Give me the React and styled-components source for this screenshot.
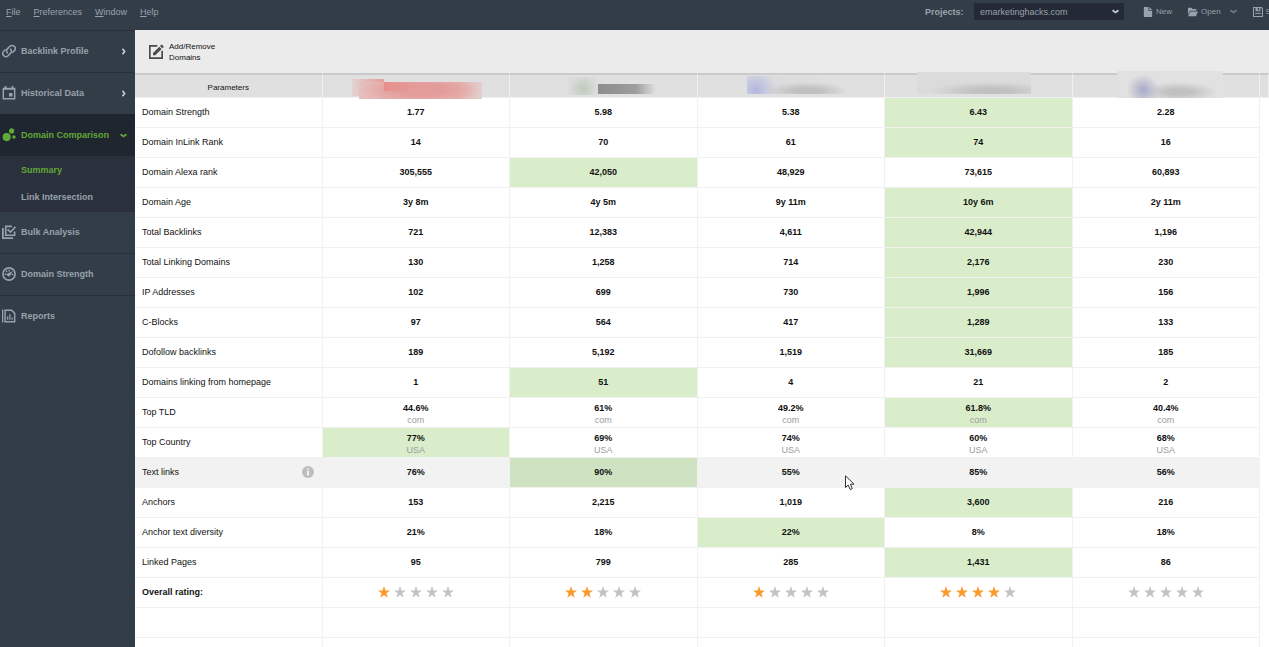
import styled, { createGlobalStyle, css } from "styled-components";

const GlobalStyle = createGlobalStyle`
  * {
    box-sizing: border-box;
  }

  body {
    margin: 0;
    font-family: "Liberation Sans", Arial, sans-serif;
    font-size: 9px;
    color: #111111;
    background: #ffffff;
  }

  button,
  select {
    font: inherit;
    color: inherit;
    border: 0;
    padding: 0;
    background: none;
    cursor: pointer;
  }
`;

const StyledApp = styled.div`
  display: flex;
  flex-direction: column;
  height: 100vh;
  overflow: hidden;
`;

/* ---------- top bar ---------- */

const StyledTopBar = styled.header`
  display: flex;
  flex: none;
  justify-content: space-between;
  height: 30px;
  overflow: hidden;
  color: #98a2ad;
  background: #333d48;
`;

const StyledMenu = styled.nav`
  display: flex;
  align-items: center;
  gap: 13px;
  height: 24px;
  padding-left: 6px;
`;

const StyledMenuButton = styled.button`
  &::first-letter {
    text-decoration: underline;
  }
`;

const StyledProjects = styled.div`
  display: flex;
  align-items: center;
  width: 344px;
  height: 23px;
  overflow: hidden;
  white-space: nowrap;
`;

const StyledProjectsLabel = styled.label`
  width: 49px;
  flex: none;
  font-weight: bold;
`;

const StyledSelectWrap = styled.div`
  position: relative;
  flex: none;
  width: 150px;
  margin-right: 19px;

  svg {
    position: absolute;
    top: 5px;
    right: 5px;
    pointer-events: none;
  }
`;

const StyledSelect = styled.select`
  width: 100%;
  height: 17px;
  padding: 0 6px;
  appearance: none;
  border-radius: 1px;
  background: #232a35;
`;

const StyledFileButton = styled.button`
  display: flex;
  flex: none;
  align-items: center;
  gap: 3px;
  height: 22px;
  margin-right: ${({ $space }) => $space || 16}px;
  font-size: 8px;
`;

/* ---------- sidebar ---------- */

const StyledBody = styled.div`
  display: flex;
  flex: 1;
  min-height: 0;
`;

const StyledSidebar = styled.nav`
  flex: none;
  width: 135px;
  color: #98a2ad;
  font-weight: bold;
  background: #333d48;
`;

const StyledNavItem = styled.button`
  display: flex;
  align-items: center;
  gap: 5px;
  width: 100%;
  height: 42px;
  padding: 0 8px 1px 2px;
  text-align: left;
  font-weight: bold;
  border-top: 1px solid #28303b;

  ${({ $active }) =>
    $active &&
    css`
      color: #62a836;
      border-color: #1f262f;
      background: #1f262f;
    `}

  svg {
    flex: none;
  }

  span {
    flex: 1;
  }
`;

const StyledSubNav = styled.div`
  display: flex;
  flex-direction: column;
  padding-top: 1px;
  background: #2a313d;
`;

const StyledSubLink = styled.a`
  padding-left: 21px;
  line-height: 27px;
  text-decoration: none;
  color: ${({ $active }) => ($active ? "#62a836" : "#98a2ad")};
`;

/* ---------- content ---------- */

const StyledMain = styled.main`
  flex: 1;
  min-width: 0;
  overflow: hidden;
`;

const StyledToolbar = styled.div`
  display: flex;
  align-items: center;
  height: 43px;
  padding-left: 13px;
  background: #ebebeb;
`;

const StyledToolButton = styled.button`
  display: flex;
  align-items: center;
  gap: 5px;
  font-size: 8px;
  line-height: 11px;
  text-align: left;
`;

const StyledTable = styled.table`
  width: 100%;
  table-layout: fixed;
  border-collapse: separate;
  border-spacing: 0;
`;

const StyledHeadCell = styled.th`
  position: relative;
  height: 25px;
  padding: 2px 0 0;
  font-size: 8px;
  font-weight: normal;
  border-top: 2px solid #cacaca;
  border-right: 1px solid #f0f0f0;
  border-bottom: 1px solid #f0f0f0;
  background: #e0e0e0;
`;

const StyledSmudge = styled.span`
  position: absolute;
  left: ${({ $x }) => $x}px;
  top: ${({ $y }) => $y}px;
  width: ${({ $w }) => $w}px;
  height: ${({ $h }) => $h}px;
  background: ${({ $fill }) => $fill};
`;

const StyledRow = styled.tr`
  background: ${({ $hover }) => ($hover ? "#f2f2f2" : "#ffffff")};
`;

const StyledNameCell = styled.th`
  height: 30px;
  padding: 0 8px 2px 7px;
  text-align: left;
  font-weight: ${({ $bold }) => ($bold ? "bold" : "normal")};
  border-right: 1px solid #f1f1f1;
  border-bottom: 1px solid #f1f1f1;

  div {
    display: flex;
    align-items: center;
    justify-content: space-between;
  }
`;

const StyledCell = styled.td`
  height: 30px;
  padding: ${({ $tall }) => ($tall ? "2px 0 0" : "0 0 2px")};
  text-align: center;
  line-height: 12px;
  font-weight: bold;
  border-right: 1px solid #f1f1f1;
  border-bottom: 1px solid #f1f1f1;
  background: ${({ $best, $hover }) =>
    $best ? ($hover ? "#cfe3c3" : "#d9edca") : "transparent"};

  small {
    display: block;
    font-size: 9px;
    font-weight: normal;
    color: #9b9b9b;
  }
`;

const StyledEdgeCell = styled.td`
  padding: 0;
  background: #ffffff;
`;

const StyledStars = styled.div`
  display: flex;
  justify-content: center;
  gap: 4px;
`;

const StyledCursor = styled.svg`
  position: absolute;
  left: 845px;
  top: 475px;
  pointer-events: none;
`;

/* ---------- icons ---------- */

const Icon = ({ size = 14, children, ...rest }) => (
  <svg
    width={size}
    height={size}
    viewBox="0 0 24 24"
    fill="currentColor"
    aria-hidden="true"
    {...rest}
  >
    {children}
  </svg>
);

const LinkIcon = () => (
  <Icon fill="none" stroke="currentColor" strokeWidth="2.6" strokeLinecap="round">
    <path d="M9.5 15.500a5.200 5.200 0 0 1 0-7.500l4-4a5.200 5.200 0 0 1 7.500 7.500l-2.500 2.500" />
    <path d="M14.500 8.500a5.200 5.200 0 0 1 0 7.500l-4 4a5.200 5.200 0 0 1-7.500-7.500l2.500-2.500" />
  </Icon>
);

const CalendarIcon = () => (
  <Icon>
    <path
      fillRule="evenodd"
      d="M4.500 0h3v3h9V0h3v3H23v20H1V3h3.500zM3.500 6.500v14h17v-14z"
    />
    <path d="M12 12h6v6h-6z" />
  </Icon>
);

const BubblesIcon = () => (
  <Icon>
    <circle cx="8" cy="15.500" r="7" />
    <circle cx="16.500" cy="5" r="4.500" />
    <circle cx="20.500" cy="15.500" r="3" />
  </Icon>
);

const ChecklistIcon = () => (
  <Icon>
    <path d="M0 5h3v16h16v3H0z" />
    <path d="M5 1h12v2.800H7.800v12.400h12.400V11H23v8H5z" />
    <path d="M8.500 8.500l2-2 4 3.800 7.500-8 2 2-9.500 10z" />
  </Icon>
);

const GaugeIcon = () => (
  <Icon>
    <circle cx="12" cy="12" r="10.500" fill="none" stroke="currentColor" strokeWidth="2.800" />
    <path d="M18.500 7l-4.600 7.500a2.700 2.700 0 1 1-3.600-3.600z" />
    <path d="M4.500 11h3.500v2.500H4.500zM16.500 11.500h3V14h-3zM11 4.500h2.400v3H11zM6 7l1.700-1.700 2 2L8 9z" />
  </Icon>
);

const ReportIcon = () => (
  <Icon>
    <path d="M0 1h2.200v22H0z" />
    <path fillRule="evenodd" d="M4 1h13l6 6v16H4zM6.500 3.500v17h14V8.200l-4.700-4.700z" />
    <path d="M8.500 13h2.200v5.500H8.500zM12.400 9h2.200v9.500h-2.200zM16.300 14.500h2.200v4h-2.200z" />
  </Icon>
);

const EditIcon = () => (
  <Icon size={16} color="#4b4b4b">
    <path d="M1.500 1.500H14V4H4v16h16V10h2.500v12.500h-21z" />
    <path d="M7.500 13.500L17 4l3.500 3.500L11 17H7.500zM18 3l1.700-1.700a1 1 0 0 1 1.400 0l2.100 2.100a1 1 0 0 1 0 1.400L21.500 6.500z" />
  </Icon>
);

const FileIcon = () => (
  <Icon size={10}>
    <path d="M2 0h11v9h9v15H2z" />
    <path d="M15 0l7 7h-7z" />
  </Icon>
);

const FolderIcon = () => (
  <Icon size={10}>
    <path d="M0 2h8l3 3h9v4H5L0 19z" />
    <path d="M6 11h18l-5 11H0z" />
  </Icon>
);

const SaveIcon = () => (
  <Icon size={10}>
    <path
      fillRule="evenodd"
      d="M0 0h21l3 3v21H0zM2.500 2.500v19h19V4l-1.500-1.500h-2V10H6V2.500zM11.500 2.500V8H15V2.500z"
    />
    <path d="M5 14h14v2.500H5z" />
  </Icon>
);

const Chevron = ({ down, color = "#c3cad2" }) => (
  <svg width="7" height="7" viewBox="0 0 7 7" fill="none" stroke={color} strokeWidth="1.700" aria-hidden="true">
    <path d={down ? "M0.500 2.200L3.500 4.400L6.500 2.200" : "M2.500 0.800L4.600 3.500L2.500 6.200"} />
  </svg>
);

const InfoIcon = () => (
  <svg width="12" height="12" viewBox="0 0 12 12" role="img" aria-label="Info">
    <circle cx="6" cy="6" r="6" fill="#bdbdbd" />
    <path d="M5.200 2.500h1.600v1.500H5.200zM5.200 5h1.600v4.500H5.200z" fill="#ffffff" />
  </svg>
);

const Star = ({ on }) => (
  <svg width="12" height="12" viewBox="0 0 24 24" fill={on ? "#fb9a2c" : "#c2c2c2"} aria-hidden="true">
    <path d="M12 0l3 8.800h9l-7.200 5.600 2.700 9L12 18l-7.500 5.400 2.700-9L0 8.800h9z" />
  </svg>
);

/* ---------- data ---------- */

// hidden domain names in the column heads, relative to their cell
const smudges = [
  [
    { x: 29, y: 4, w: 32, h: 17, fill: "linear-gradient(90deg, #e2d3d2, #e39c99)" },
    {
      x: 36,
      y: 7,
      w: 123,
      h: 17,
      fill: "radial-gradient(ellipse 60px 14px at 50% 45%, #e39c9a 40%, transparent), linear-gradient(90deg, #e4c0be, #e5b3b1 30%, #e5b3b1 80%, #e3cfce)",
    },
    { x: 61, y: 7, w: 30, h: 9, fill: "linear-gradient(100deg, #e98d88, rgba(227, 156, 154, 0))" },
  ],
  [
    { x: 58, y: 2, w: 30, h: 18, fill: "radial-gradient(circle at 50% 65%, #bfcbbd, #dcdcdc 75%)" },
    { x: 88, y: 9, w: 58, h: 10, fill: "linear-gradient(90deg, #8d8d8d, #9d9d9d 65%, #e0e0e0)" },
  ],
  [
    {
      x: 49,
      y: 1,
      w: 103,
      h: 18,
      fill: "radial-gradient(circle 20px at 9px 14px, #b2b7df, transparent), radial-gradient(ellipse 42px 9px at 60px 15px, #c0c0c0 30%, transparent), linear-gradient(90deg, #dadadd, #e0e0e0)",
    },
  ],
  [
    {
      x: 32,
      y: -3,
      w: 114,
      h: 22,
      fill: "radial-gradient(ellipse 60px 9px at 74px 19px, #c1c1c1 30%, transparent), #dbdbdb",
    },
  ],
  [
    {
      x: 44,
      y: -4,
      w: 106,
      h: 27,
      fill: "radial-gradient(circle 16px at 26px 19px, #adb0ca 10%, transparent), radial-gradient(ellipse 38px 10px at 62px 21px, #c1c1c1 30%, transparent), #e1e1e1",
    },
  ],
];

const rows = [
  { name: "Domain Strength", values: ["1.77", "5.98", "5.38", "6.43", "2.28"], best: 3 },
  { name: "Domain InLink Rank", values: ["14", "70", "61", "74", "16"], best: 3 },
  { name: "Domain Alexa rank", values: ["305,555", "42,050", "48,929", "73,615", "60,893"], best: 1 },
  { name: "Domain Age", values: ["3y 8m", "4y 5m", "9y 11m", "10y 6m", "2y 11m"], best: 3 },
  { name: "Total Backlinks", values: ["721", "12,383", "4,611", "42,944", "1,196"], best: 3 },
  { name: "Total Linking Domains", values: ["130", "1,258", "714", "2,176", "230"], best: 3 },
  { name: "IP Addresses", values: ["102", "699", "730", "1,996", "156"], best: 3 },
  { name: "C-Blocks", values: ["97", "564", "417", "1,289", "133"], best: 3 },
  { name: "Dofollow backlinks", values: ["189", "5,192", "1,519", "31,669", "185"], best: 3 },
  { name: "Domains linking from homepage", values: ["1", "51", "4", "21", "2"], best: 1 },
  { name: "Top TLD", values: ["44.6%", "61%", "49.2%", "61.8%", "40.4%"], note: "com", best: 3 },
  { name: "Top Country", values: ["77%", "69%", "74%", "60%", "68%"], note: "USA", best: 0 },
  { name: "Text links", values: ["76%", "90%", "55%", "85%", "56%"], best: 1, hover: true },
  { name: "Anchors", values: ["153", "2,215", "1,019", "3,600", "216"], best: 3 },
  { name: "Anchor text diversity", values: ["21%", "18%", "22%", "8%", "18%"], best: 2 },
  { name: "Linked Pages", values: ["95", "799", "285", "1,431", "86"], best: 3 },
];

const ratings = [1, 2, 1, 4, 0];

const TopBar = () => (
  <StyledTopBar>
    <StyledMenu aria-label="Main menu">
      {["File", "Preferences", "Window", "Help"].map((item) => (
        <StyledMenuButton key={item}>{item}</StyledMenuButton>
      ))}
    </StyledMenu>
    <StyledProjects>
      <StyledProjectsLabel htmlFor="project">Projects:</StyledProjectsLabel>
      <StyledSelectWrap>
        <StyledSelect id="project">
          <option>emarketinghacks.com</option>
        </StyledSelect>
        <Chevron down />
      </StyledSelectWrap>
      <StyledFileButton>
        <FileIcon />
        New
      </StyledFileButton>
      <StyledFileButton $space={9}>
        <FolderIcon />
        Open
      </StyledFileButton>
      <StyledFileButton aria-label="Open recent">
        <Chevron down color="#6f7985" />
      </StyledFileButton>
      <StyledFileButton>
        <SaveIcon />
        Save
      </StyledFileButton>
    </StyledProjects>
  </StyledTopBar>
);

const Sidebar = () => (
  <StyledSidebar aria-label="Sections">
    <StyledNavItem>
      <LinkIcon />
      <span>Backlink Profile</span>
      <Chevron />
    </StyledNavItem>
    <StyledNavItem>
      <CalendarIcon />
      <span>Historical Data</span>
      <Chevron />
    </StyledNavItem>
    <StyledNavItem $active>
      <BubblesIcon />
      <span>Domain Comparison</span>
      <Chevron down color="#62a836" />
    </StyledNavItem>
    <StyledSubNav>
      <StyledSubLink href="#summary" $active>
        Summary
      </StyledSubLink>
      <StyledSubLink href="#intersection">Link Intersection</StyledSubLink>
    </StyledSubNav>
    <StyledNavItem>
      <ChecklistIcon />
      <span>Bulk Analysis</span>
    </StyledNavItem>
    <StyledNavItem>
      <GaugeIcon />
      <span>Domain Strength</span>
    </StyledNavItem>
    <StyledNavItem>
      <ReportIcon />
      <span>Reports</span>
    </StyledNavItem>
  </StyledSidebar>
);

const EmptyRow = () => (
  <StyledRow>
    <StyledCell />
    {ratings.map((_, i) => (
      <StyledCell key={i} />
    ))}
    <StyledEdgeCell />
  </StyledRow>
);

const ComparisonTable = () => (
  <StyledTable>
    <colgroup>
      <col />
      <col />
      <col />
      <col />
      <col />
      <col />
      <col width="9" />
    </colgroup>
    <thead>
      <tr>
        <StyledHeadCell scope="col">Parameters</StyledHeadCell>
        {smudges.map((parts, i) => (
          <StyledHeadCell key={i} scope="col">
            {parts.map((part, j) => (
              <StyledSmudge key={j} $x={part.x} $y={part.y} $w={part.w} $h={part.h} $fill={part.fill} />
            ))}
          </StyledHeadCell>
        ))}
        <StyledHeadCell as="td" />
      </tr>
    </thead>
    <tbody>
      {rows.map((row) => (
        <StyledRow key={row.name} $hover={row.hover}>
          <StyledNameCell scope="row">
            <div>
              {row.name}
              {row.hover && <InfoIcon />}
            </div>
          </StyledNameCell>
          {row.values.map((value, i) => (
            <StyledCell key={i} $best={row.best === i} $hover={row.hover} $tall={row.note}>
              {value}
              {row.note && <small>{row.note}</small>}
            </StyledCell>
          ))}
          <StyledEdgeCell />
        </StyledRow>
      ))}
      <StyledRow>
        <StyledNameCell scope="row" $bold>
          Overall rating:
        </StyledNameCell>
        {ratings.map((rating, i) => (
          <StyledCell key={i}>
            <StyledStars role="img" aria-label={`${rating} of 5`}>
              {[0, 1, 2, 3, 4].map((n) => (
                <Star key={n} on={n < rating} />
              ))}
            </StyledStars>
          </StyledCell>
        ))}
        <StyledEdgeCell />
      </StyledRow>
      <EmptyRow />
      <EmptyRow />
    </tbody>
  </StyledTable>
);

const App = () => {
  return (
    <StyledApp>
      <GlobalStyle />
      <TopBar />
      <StyledBody>
        <Sidebar />
        <StyledMain>
          <StyledToolbar>
            <StyledToolButton>
              <EditIcon />
              <span>
                Add/Remove
                <br />
                Domains
              </span>
            </StyledToolButton>
          </StyledToolbar>
          <ComparisonTable />
        </StyledMain>
      </StyledBody>
      <StyledCursor width="10" height="16" viewBox="0 0 10 16" aria-hidden="true">
        <path
          d="M0.500 0.800V12.500L3.200 10L5.200 14.500L7.300 13.600L5.400 9.200H9z"
          fill="#ffffff"
          stroke="#333333"
        />
      </StyledCursor>
    </StyledApp>
  );
};

export default App;
